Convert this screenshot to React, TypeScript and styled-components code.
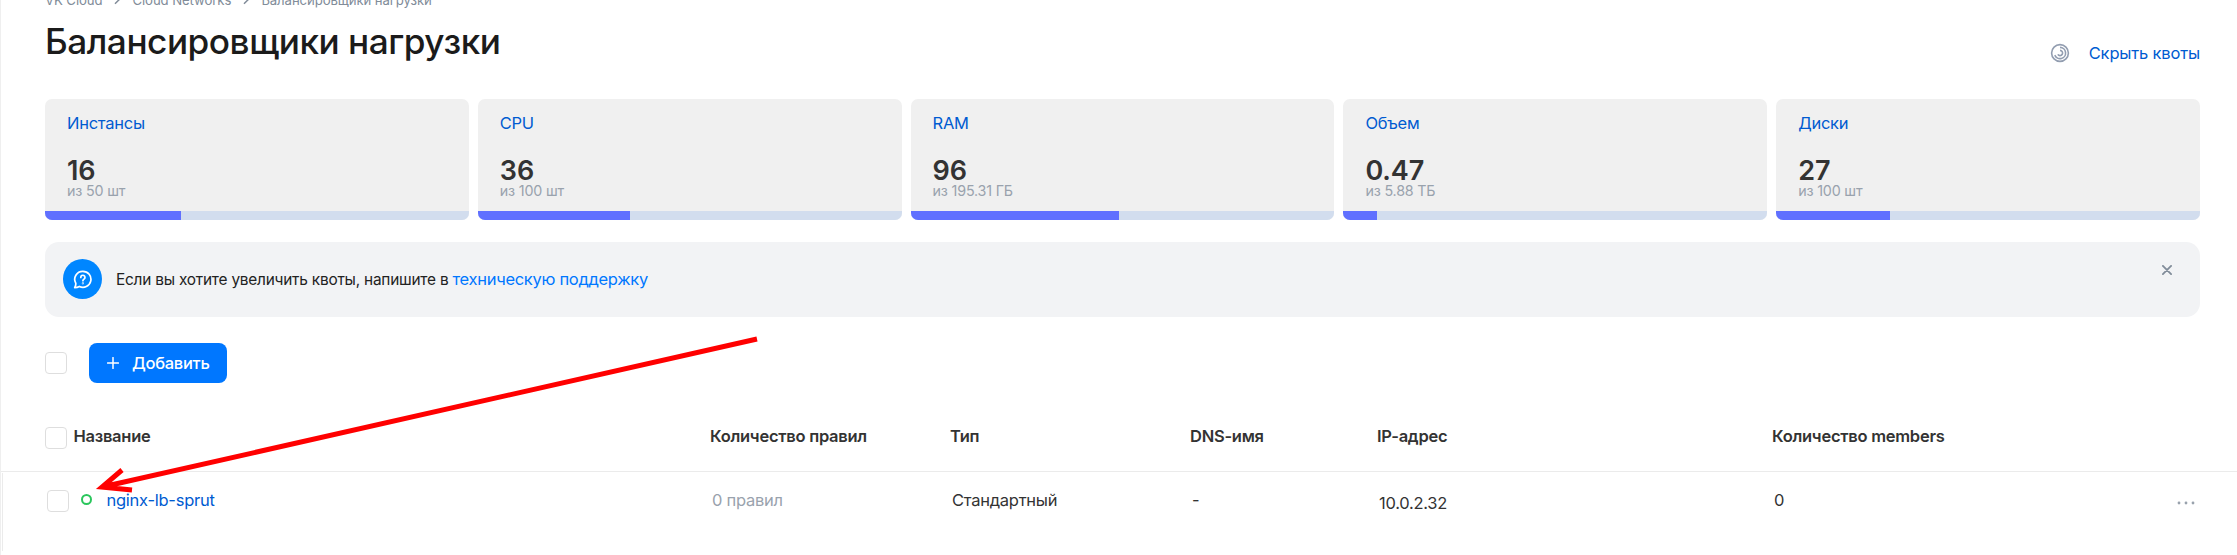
import React from 'react';
import styled, { createGlobalStyle } from 'styled-components';

const GlobalStyle = createGlobalStyle`
  * { box-sizing: border-box; }
  body {
    margin: 0;
    background: #fff;
    color: #333;
    font-family: Inter, Roboto, sans-serif;
    font-size: 16.5px;
    line-height: 24px;
    letter-spacing: -0.26px;
    overflow: hidden;
  }
`;

const Page = styled.main`
  position: relative;
  height: 555px;
  border-left: 1px solid #efefef;
  overflow: hidden;
`;

const Content = styled.div`
  padding: 0 37px 0 44px;
`;

const Breadcrumbs = styled.nav`
  display: flex;
  align-items: center;
  gap: 11px;
  height: 20px;
  margin-top: -10px;
  font-size: 13.2px;
  line-height: 20px;
  letter-spacing: -0.1px;
  color: #818c99;
`;

const Header = styled.header`
  display: flex;
  justify-content: space-between;
  height: 89px;
`;

const Title = styled.h1`
  margin: 9px 0 0;
  font-size: 35.2px;
  line-height: 44px;
  font-weight: 500;
  letter-spacing: -0.48px;
  color: #1b1b1b;
  white-space: nowrap;
`;

const QuotaToggle = styled.div`
  display: flex;
  align-items: center;
  gap: 19px;
  height: 24px;
  margin-top: 31px;
  letter-spacing: -0.17px;
`;

const Link = styled.a`
  color: #005bd1;
`;

const Quotas = styled.section`
  display: grid;
  grid-template-columns: repeat(5, 1fr);
  gap: 9px;
`;

const QuotaCard = styled.article`
  display: flex;
  flex-direction: column;
  height: 121px;
  border-radius: 7px;
  background: #f0f0f0;
  overflow: hidden;
`;

const QuotaBody = styled.div`
  flex: 1;
  padding: 12px 22px 0;
`;

const QuotaValue = styled.div`
  margin-top: 23px;
  font-size: 27px;
  line-height: 26px;
  font-weight: 600;
  letter-spacing: -0.1px;
`;

const QuotaLimit = styled.div`
  font-size: 14.3px;
  line-height: 14px;
  letter-spacing: -0.18px;
  color: #99a2ad;
`;

const Track = styled.div`
  height: 9px;
  background: #d2ddee;
`;

const Fill = styled.div<{ $value: number }>`
  width: ${(p) => p.$value}%;
  height: 100%;
  background: #6070ff;
`;

const Notice = styled.section`
  display: flex;
  align-items: flex-start;
  height: 75px;
  margin-top: 22px;
  padding: 17px 28px 0 18px;
  border-radius: 14px;
  background: #f2f3f5;
  color: #222;
`;

const NoticeIcon = styled.span`
  display: grid;
  place-items: center;
  width: 39px;
  height: 40px;
  margin-right: 14px;
  border-radius: 50%;
  background: #0086ff;
`;

const NoticeText = styled.p`
  flex: 1;
  margin: 8px 0 0;
  font-size: 15.4px;
  letter-spacing: -0.22px;
`;

const SupportLink = styled.a`
  color: #0077ff;
  font-size: 16.5px;
  letter-spacing: -0.3px;
`;

const Close = styled.span`
  display: flex;
  margin-top: 6px;
`;

const Toolbar = styled.div`
  display: flex;
  align-items: center;
  gap: 22px;
  height: 40px;
  margin-top: 26px;
`;

const Checkbox = styled.span`
  flex: none;
  width: 22px;
  height: 22px;
  border: 1px solid #dedede;
  border-radius: 4px;
  background: #fff;
`;

const AddButton = styled.button`
  display: flex;
  align-items: center;
  gap: 13px;
  width: 138px;
  height: 40px;
  padding: 0 0 0 18px;
  border: 0;
  border-radius: 8px;
  background: #0077ff;
  color: #fff;
  font: 500 16.5px/24px Inter, sans-serif;
  letter-spacing: -0.28px;
`;

const HeadRow = styled.div`
  display: grid;
  grid-template-columns: 665px 240px 240px 187px 395px 1fr;
  height: 89px;
  padding: 41px 37px 0 44px;
  border-bottom: 1px solid #ebebeb;
  font-weight: 600;
`;

const BodyRow = styled.div`
  display: grid;
  grid-template-columns: 665px 240px 240px 187px 395px 1fr;
  height: 78px;
  margin: 1px 0 0 1px;
  padding: 15px 42px 0 44px;
  border-left: 1px solid #ebebeb;
`;

const Cell = styled.div<{ $muted?: boolean; $drop?: number }>`
  display: flex;
  align-items: flex-start;
  padding-top: ${(p) => p.$drop ?? 0}px;
  color: ${(p) => (p.$muted ? '#99a2ad' : 'inherit')};
  white-space: nowrap;
`;

const HeadCheckbox = styled(Checkbox)`
  margin: 3px 6.5px 0 0;
`;

const RowCheckbox = styled(Checkbox)`
  margin: 2px 12px 0 0;
`;

const Status = styled.span`
  width: 11px;
  height: 11px;
  margin: 6px 14.5px 0 0;
  border: 2px solid #2ac65c;
  border-radius: 50%;
`;

const LastCell = styled(Cell)`
  justify-content: space-between;
`;

const More = styled.span`
  display: flex;
  margin-top: 13px;
`;

const Pointer = styled.svg`
  position: absolute;
  left: -1px;
  top: 0;
  pointer-events: none;
`;

const quotas = [
  { name: 'Инстансы', value: '16', limit: 'из 50 шт', percent: 32 },
  { name: 'CPU', value: '36', limit: 'из 100 шт', percent: 36 },
  { name: 'RAM', value: '96', limit: 'из 195.31 ГБ', percent: 49.1 },
  { name: 'Объем', value: '0.47', limit: 'из 5.88 ТБ', percent: 8 },
  { name: 'Диски', value: '27', limit: 'из 100 шт', percent: 26.9 },
];

const Chevron = () => (
  <svg width="8" height="10" viewBox="0 0 8 10" fill="none" stroke="#818c99" strokeWidth="1.5">
    <path d="M2 1.2 5.8 5 2 8.8" />
  </svg>
);

export default function App() {
  return (
    <>
      <GlobalStyle />
      <Page>
        <Content>
          <Breadcrumbs>
            <span>VK Cloud</span>
            <Chevron />
            <span>Cloud Networks</span>
            <Chevron />
            <span>Балансировщики нагрузки</span>
          </Breadcrumbs>
          <Header>
            <Title>Балансировщики нагрузки</Title>
            <QuotaToggle>
              <svg width="20" height="20" viewBox="0 0 20 20" fill="none" stroke="#929db0" strokeWidth="1.6">
                <circle cx="10" cy="10" r="8.4" />
                <path d="M10 4.4a5.6 5.6 0 1 1-5.2 7.7" />
                <path d="M10 7.4a2.6 2.6 0 1 1-2.2 4" />
              </svg>
              <Link>Скрыть квоты</Link>
            </QuotaToggle>
          </Header>
          <Quotas>
            {quotas.map((q) => (
              <QuotaCard key={q.name}>
                <QuotaBody>
                  <Link>{q.name}</Link>
                  <QuotaValue>{q.value}</QuotaValue>
                  <QuotaLimit>{q.limit}</QuotaLimit>
                </QuotaBody>
                <Track>
                  <Fill $value={q.percent} />
                </Track>
              </QuotaCard>
            ))}
          </Quotas>
          <Notice>
            <NoticeIcon>
              <svg width="19" height="19" viewBox="0 0 20 20" fill="none" stroke="#fff" strokeWidth="1.8" strokeLinecap="round" strokeLinejoin="round">
                <path d="M10.4 1.4a8.4 8.4 0 1 1-3.7 15.9c-1.6.9-3.2 1.2-4.9 1.2.9-1.2 1.3-2.8 1.1-4.6A8.4 8.4 0 0 1 10.4 1.4Z" />
                <path d="M8.2 7.8a2.2 2.2 0 1 1 3.4 1.8c-.8.5-1.2.9-1.2 1.7" />
                <circle cx="10.4" cy="14" r=".3" />
              </svg>
            </NoticeIcon>
            <NoticeText>
              Если вы хотите увеличить квоты, напишите в <SupportLink>техническую поддержку</SupportLink>
            </NoticeText>
            <Close>
              <svg width="10" height="10" viewBox="0 0 10 10" stroke="#818c99" strokeWidth="1.8" strokeLinecap="round">
                <path d="m.9.9 8.2 8.2M9.1.9.9 9.1" />
              </svg>
            </Close>
          </Notice>
          <Toolbar>
            <Checkbox />
            <AddButton>
              <svg width="12" height="12" viewBox="0 0 12 12" stroke="#fff" strokeWidth="1.5" strokeLinecap="round">
                <path d="M6 .6v10.8M.6 6h10.8" />
              </svg>
              Добавить
            </AddButton>
          </Toolbar>
        </Content>
        <HeadRow>
          <Cell>
            <HeadCheckbox />
            Название
          </Cell>
          <Cell>Количество правил</Cell>
          <Cell>Тип</Cell>
          <Cell>DNS-имя</Cell>
          <Cell>IP-адрес</Cell>
          <Cell>Количество members</Cell>
        </HeadRow>
        <BodyRow>
          <Cell>
            <RowCheckbox />
            <Status />
            <Link>nginx-lb-sprut</Link>
          </Cell>
          <Cell $muted>0 правил</Cell>
          <Cell>Стандартный</Cell>
          <Cell>-</Cell>
          <Cell $drop={3}>10.0.2.32</Cell>
          <LastCell>
            0
            <More>
              <svg width="18" height="4" viewBox="0 0 18 4" fill="#99a2ad">
                <circle cx="2" cy="2" r="1.4" />
                <circle cx="9" cy="2" r="1.4" />
                <circle cx="16" cy="2" r="1.4" />
              </svg>
            </More>
          </LastCell>
        </BodyRow>
        <Pointer width="800" height="555" viewBox="0 0 800 555" fill="none" stroke="#f00" strokeWidth="5">
          <path d="M757 339 102 487M122 470l-20 17 30 3" />
        </Pointer>
      </Page>
    </>
  );
}
